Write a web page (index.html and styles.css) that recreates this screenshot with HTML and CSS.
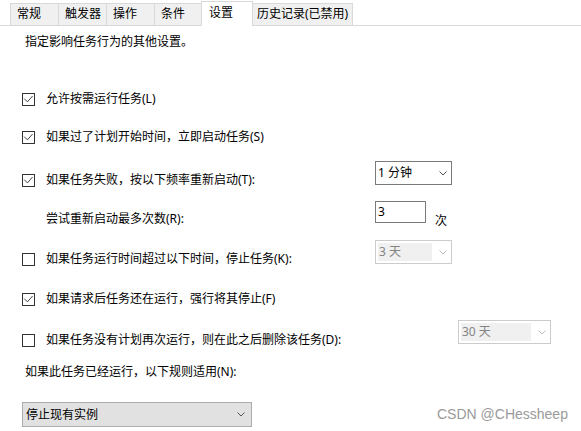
FILE: index.html
```html
<!DOCTYPE html>
<html lang="zh-CN">
<head>
<meta charset="utf-8">
<title>设置</title>
<link rel="stylesheet" href="styles.css">
</head>
<body>
<div class="dialog">
  <div class="tabbar">
    <div class="tab tab-a">常规</div>
    <div class="tab tab-a">触发器</div>
    <div class="tab tab-a">操作</div>
    <div class="tab tab-b">条件</div>
    <div class="tab tab-sel">设置</div>
    <div class="tab tab-last">历史记录(已禁用)</div>
  </div>
  <div class="panel">
    <p class="intro">指定影响任务行为的其他设置。</p>

    <div class="row r1">
      <label class="check"><svg class="box" width="13" height="13" viewBox="0 0 13 13"><rect x="0.5" y="0.5" width="12" height="12" fill="#fff" stroke="#333"/><path d="M2.2 5.6 5.4 8.9 10.6 3" fill="none" stroke="#444"/></svg>允许按需运行任务(L)</label>
    </div>

    <div class="row r2">
      <label class="check"><svg class="box" width="13" height="13" viewBox="0 0 13 13"><rect x="0.5" y="0.5" width="12" height="12" fill="#fff" stroke="#333"/><path d="M2.2 5.6 5.4 8.9 10.6 3" fill="none" stroke="#444"/></svg>如果过了计划开始时间，立即启动任务(S)</label>
    </div>

    <div class="row r3">
      <label class="check lead"><svg class="box" width="13" height="13" viewBox="0 0 13 13"><rect x="0.5" y="0.5" width="12" height="12" fill="#fff" stroke="#333"/><path d="M2.2 5.6 5.4 8.9 10.6 3" fill="none" stroke="#444"/></svg>如果任务失败，按以下频率重新启动(T):</label>
      <div class="select sel-small"><span class="val">1 分钟</span><svg class="chev" width="8" height="5" viewBox="0 0 8 5"><path d="M0.5 0.5 4 4 7.5 0.5" fill="none" stroke="#555"/></svg></div>
    </div>

    <div class="row r4">
      <span class="lead plain">尝试重新启动最多次数(R):</span>
      <div class="input">3</div>
      <span class="unit">次</span>
    </div>

    <div class="row r5">
      <label class="check lead"><svg class="box" width="13" height="13" viewBox="0 0 13 13"><rect x="0.5" y="0.5" width="12" height="12" fill="#fff" stroke="#333"/></svg>如果任务运行时间超过以下时间，停止任务(K):</label>
      <div class="select sel-small disabled"><span class="field">3 天</span><svg class="chev" width="8" height="5" viewBox="0 0 8 5"><path d="M0.5 0.5 4 4 7.5 0.5" fill="none" stroke="#bdbdbd"/></svg></div>
    </div>

    <div class="row r6">
      <label class="check"><svg class="box" width="13" height="13" viewBox="0 0 13 13"><rect x="0.5" y="0.5" width="12" height="12" fill="#fff" stroke="#333"/><path d="M2.2 5.6 5.4 8.9 10.6 3" fill="none" stroke="#444"/></svg>如果请求后任务还在运行，强行将其停止(F)</label>
    </div>

    <div class="row r7">
      <label class="check lead lead-wide"><svg class="box" width="13" height="13" viewBox="0 0 13 13"><rect x="0.5" y="0.5" width="12" height="12" fill="#fff" stroke="#333"/></svg>如果任务没有计划再次运行，则在此之后删除该任务(D):</label>
      <div class="select sel-mid disabled"><span class="field field-wide">30 天</span><svg class="chev" width="8" height="5" viewBox="0 0 8 5"><path d="M0.5 0.5 4 4 7.5 0.5" fill="none" stroke="#bdbdbd"/></svg></div>
    </div>

    <p class="intro r8">如果此任务已经运行，以下规则适用(N):</p>

    <div class="row r9">
      <div class="select sel-wide"><span class="val">停止现有实例</span><svg class="chev" width="8" height="5" viewBox="0 0 8 5"><path d="M0.5 0.5 4 4 7.5 0.5" fill="none" stroke="#555"/></svg></div>
    </div>
  </div>
  <div class="watermark">CSDN @CHessheep</div>
</div>
</body>
</html>
```
FILE: styles.css
```css
* { box-sizing: border-box; }
html, body { margin: 0; padding: 0; background: #fff; }
body {
  width: 581px;
  height: 431px;
  overflow: hidden;
  font-family: "Noto Sans", "Noto Sans CJK SC", sans-serif;
  font-size: 12px;
  line-height: 16px;
  color: #000;
}
.dialog { position: relative; width: 581px; height: 431px; }

.tabbar {
  display: flex;
  align-items: flex-end;
  height: 26px;
  padding-left: 10px;
  border-bottom: 1px solid #d9d9d9;
}
.tab {
  height: 22px;
  border: 1px solid #d9d9d9;
  border-bottom: none;
  background: #f0f0f0;
  padding: 2px 0 0 6px;
  margin-left: -1px;
  white-space: nowrap;
}
.tab:first-child { margin-left: 0; }
.tab-a { width: 49px; }
.tab-b { width: 48px; }
.tab-sel {
  width: 52px;
  height: 25px;
  margin-bottom: -1px;
  background: #fff;
  padding: 3px 0 0 7px;
  position: relative;
}
.tab-last { width: 101px; padding-left: 4px; }

.panel {
  display: flex;
  flex-direction: column;
  padding-left: 22px;
}
.intro { margin: 8px 0 0 3px; height: 16px; }

.row { display: flex; }
.check { display: flex; align-items: center; height: 16px; white-space: nowrap; }
.box { flex: none; margin-right: 11px; }
.lead { width: 353px; align-self: flex-end; }
.lead-wide { width: 436px; }
.plain { padding-left: 24px; height: 16px; margin-bottom: 2px; }

.r1 { margin-top: 41px; }
.r2 { margin-top: 22px; }
.r3 { margin-top: 16px; height: 27px; }
.r4 { margin-top: 13px; height: 28px; }
.r5 { margin-top: 11px; height: 27px; }
.r6 { margin-top: 24px; }
.r7 { margin-top: 13px; height: 28px; }
.r8 { margin-top: 16px; }
.r9 { margin-top: 22px; }

.select {
  display: flex;
  align-items: center;
  justify-content: space-between;
  height: 24px;
  border: 1px solid #7a7a7a;
  padding: 0 4px 0 2px;
  align-self: flex-start;
  background: #fff;
}
.sel-small { width: 77px; }
.sel-mid { width: 93px; }
.sel-wide {
  width: 230px;
  height: 25px;
  background: #e1e1e1;
  border-color: #adadad;
  padding: 0 6px 0 3px;
}
.chev { flex: none; }
.disabled { border-color: #cccccc; color: #838383; padding: 0 4px 0 2px; }
.field {
  display: flex;
  align-items: center;
  width: 54px;
  height: 18px;
  background: #f0f0f0;
  padding-left: 1px;
}
.field-wide { width: 70px; }

.input {
  width: 51px;
  height: 22px;
  border: 1px solid #7a7a7a;
  padding: 2px 0 0 2px;
  align-self: flex-start;
}
.unit { align-self: flex-end; margin-left: 9px; }

.watermark {
  position: absolute;
  left: 437px;
  top: 405px;
  font-family: "Liberation Sans", Arial, sans-serif;
  font-size: 14px;
  line-height: 18px;
  color: #9a9a9a;
}
```
